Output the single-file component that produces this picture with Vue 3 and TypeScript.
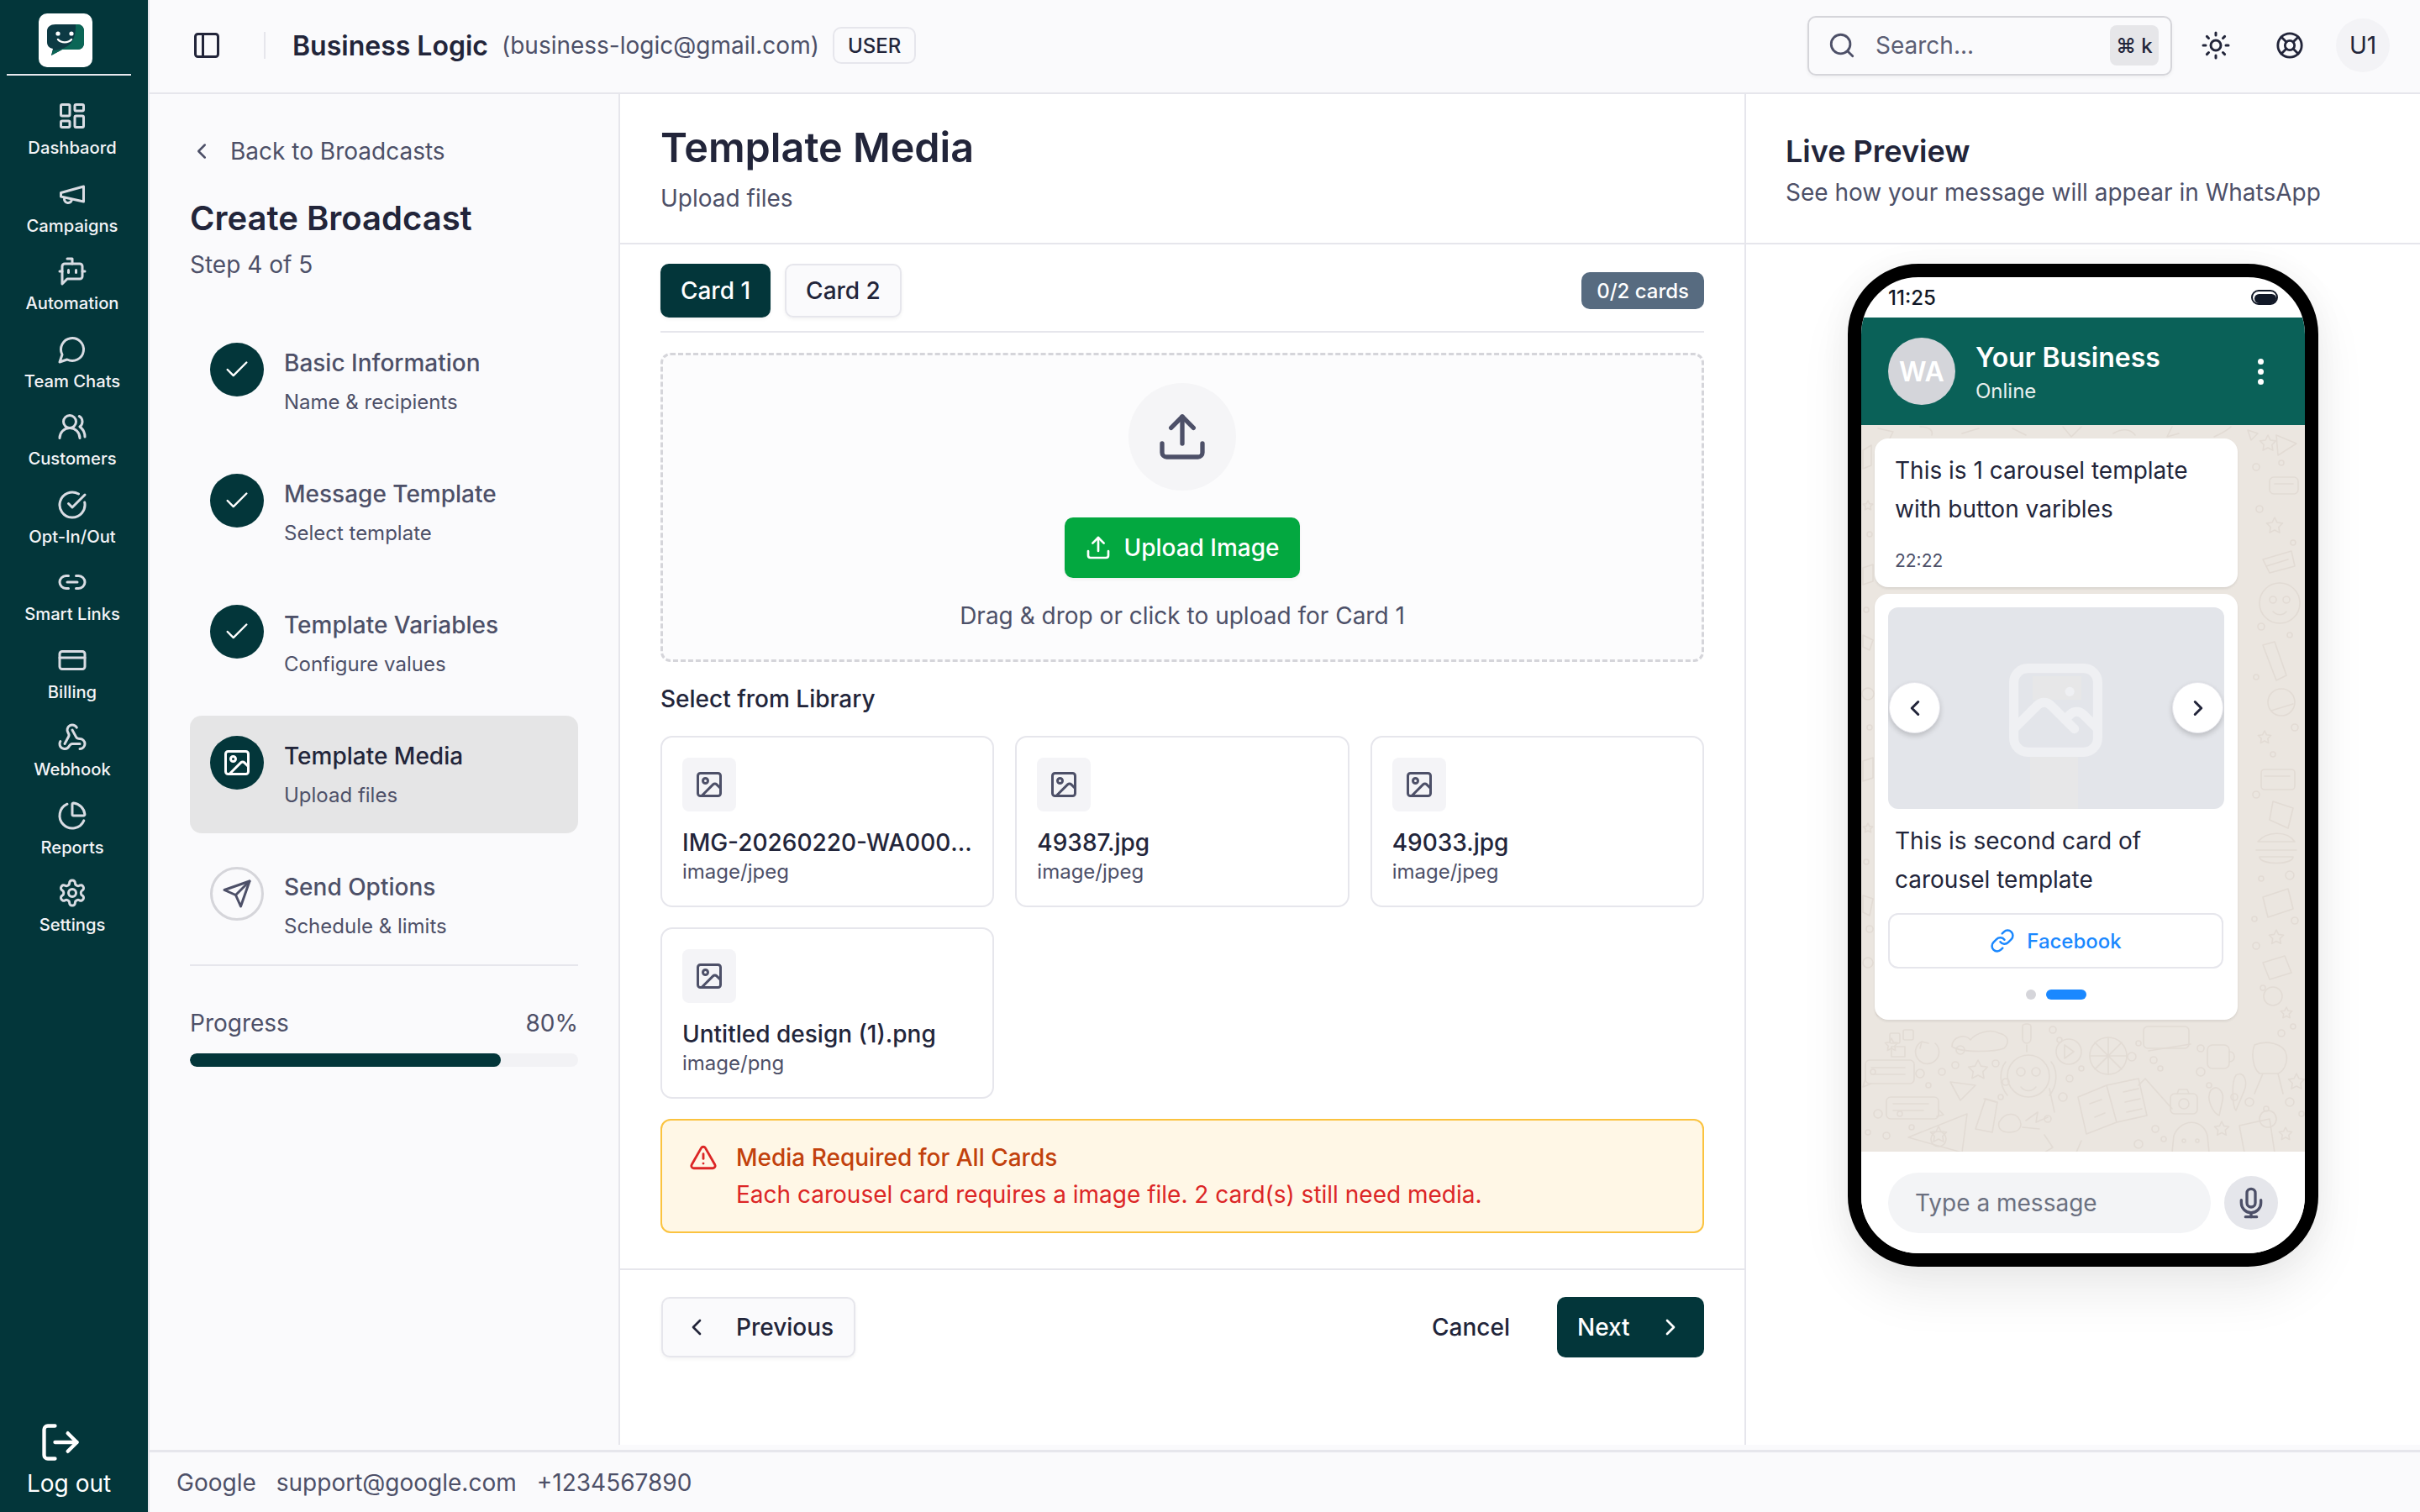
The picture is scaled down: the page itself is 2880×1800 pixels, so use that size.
<script setup lang="ts">
import { h } from 'vue'

const c = (x: number, y: number, r: number) => `M${x - r} ${y}a${r} ${r} 0 1 0 ${2 * r} 0a${r} ${r} 0 1 0 ${-2 * r} 0`
const rr = (x: number, y: number, w: number, he: number, r: number) =>
  `M${x + r} ${y}h${w - 2 * r}a${r} ${r} 0 0 1 ${r} ${r}v${he - 2 * r}a${r} ${r} 0 0 1 ${-r} ${r}h${-(w - 2 * r)}a${r} ${r} 0 0 1 ${-r} ${-r}v${-(he - 2 * r)}a${r} ${r} 0 0 1 ${r} ${-r}z`

const icons: Record<string, string[]> = {
  dashboard: [rr(3, 3, 7, 9, 1), rr(14, 3, 7, 5, 1), rr(14, 12, 7, 9, 1), rr(3, 16, 7, 5, 1)],
  megaphone: ['m3 11 18-5v12L3 14v-3z', 'M11.6 16.8a3 3 0 1 1-5.8-1.6'],
  bot: ['M12 6V2H8', 'm8 18-4 4V8a2 2 0 0 1 2-2h12a2 2 0 0 1 2 2v8a2 2 0 0 1-2 2Z', 'M2 12h2', 'M9 11v2', 'M15 11v2', 'M20 12h2'],
  chat: ['M7.9 20A9 9 0 1 0 4 16.1L2 22Z'],
  users: ['M18 21a8 8 0 0 0-16 0', c(10, 8, 5), 'M22 20c0-3.37-2-6.5-4-8a5 5 0 0 0-.45-8.3'],
  optin: ['M21.801 10A10 10 0 1 1 17 3.335', 'm9 11 3 3L22 4'],
  link2: ['M9 17H7A5 5 0 0 1 7 7h2', 'M15 7h2a5 5 0 1 1 0 10h-2', 'M8 12h8'],
  card: [rr(2, 5, 20, 14, 2), 'M2 10h20'],
  webhook: ['M18 16.98h-5.99c-1.1 0-1.95.94-2.48 1.9A4 4 0 0 1 2 17c.01-.7.2-1.4.57-2', 'm6 17 3.13-5.78c.53-.97.1-2.18-.5-3.1a4 4 0 1 1 6.89-4.06', 'm12 6 3.13 5.73C15.66 12.7 16.9 13 18 13a4 4 0 0 1 0 8'],
  pie: ['M21 12c.552 0 1.005-.449.95-.998a10 10 0 0 0-8.953-8.951c-.55-.055-.998.398-.998.95v8a1 1 0 0 0 1 1z', 'M21.21 15.89A10 10 0 1 1 8 2.83'],
  settings: ['M12.22 2h-.44a2 2 0 0 0-2 2v.18a2 2 0 0 1-1 1.73l-.43.25a2 2 0 0 1-2 0l-.15-.08a2 2 0 0 0-2.73.73l-.22.38a2 2 0 0 0 .73 2.73l.15.1a2 2 0 0 1 1 1.72v.51a2 2 0 0 1-1 1.74l-.15.09a2 2 0 0 0-.73 2.73l.22.38a2 2 0 0 0 2.73.73l.15-.08a2 2 0 0 1 2 0l.43.25a2 2 0 0 1 1 1.73V20a2 2 0 0 0 2 2h.44a2 2 0 0 0 2-2v-.18a2 2 0 0 1 1-1.73l.43-.25a2 2 0 0 1 2 0l.15.08a2 2 0 0 0 2.73-.73l.22-.39a2 2 0 0 0-.73-2.73l-.15-.08a2 2 0 0 1-1-1.74v-.5a2 2 0 0 1 1-1.74l.15-.09a2 2 0 0 0 .73-2.73l-.22-.38a2 2 0 0 0-2.73-.73l-.15.08a2 2 0 0 1-2 0l-.43-.25a2 2 0 0 1-1-1.73V4a2 2 0 0 0-2-2z', c(12, 12, 3)],
  logout: ['M9 21H5a2 2 0 0 1-2-2V5a2 2 0 0 1 2-2h4', 'm16 17 5-5-5-5', 'M21 12H9'],
  panel: [rr(3, 3, 18, 18, 2), 'M9 3v18'],
  search: [c(11, 11, 8), 'm21 21-4.3-4.3'],
  sun: [c(12, 12, 4), 'M12 2v2', 'M12 20v2', 'm4.93 4.93 1.41 1.41', 'm17.66 17.66 1.41 1.41', 'M2 12h2', 'M20 12h2', 'm6.34 17.66-1.41 1.41', 'm19.07 4.93-1.41 1.41'],
  help: [c(12, 12, 10), 'm4.93 4.93 4.24 4.24', 'm14.83 9.17 4.24-4.24', 'm14.83 14.83 4.24 4.24', 'm9.17 14.83-4.24 4.24', c(12, 12, 4)],
  image: [rr(3, 3, 18, 18, 2), c(9, 9, 2), 'm21 15-3.086-3.086a2 2 0 0 0-2.828 0L6 21'],
  photo: [rr(3, 3, 18, 18, 3), 'M15 8h.01', 'M3 16l5-5c.928-.893 2.072-.893 3 0l5 5', 'M14 14l1-1c.928-.893 2.072-.893 3 0l3 3'],
  upload: ['M21 15v4a2 2 0 0 1-2 2H5a2 2 0 0 1-2-2v-4', 'M17 8l-5-5-5 5', 'M12 3v12'],
  send: ['m22 2-7 20-4-9-9-4Z', 'M22 2 11 13'],
  alert: ['m21.73 18-8-14a2 2 0 0 0-3.48 0l-8 14A2 2 0 0 0 4 21h16a2 2 0 0 0 1.73-3', 'M12 9v4', 'M12 17h.01'],
  link: ['M10 13a5 5 0 0 0 7.54.54l3-3a5 5 0 0 0-7.07-7.07l-1.72 1.71', 'M14 11a5 5 0 0 0-7.54-.54l-3 3a5 5 0 0 0 7.07 7.07l1.71-1.71'],
  mic: ['M12 2a3 3 0 0 0-3 3v7a3 3 0 0 0 6 0V5a3 3 0 0 0-3-3Z', 'M19 10v2a7 7 0 0 1-14 0v-2', 'M12 19v3', 'M8 22h8'],
  left: ['m15 18-6-6 6-6'],
  right: ['m9 18 6-6-6-6'],
  check: ['M20 6 9 17l-5-5'],
}

const Icon = (props: { n: string; s?: number; w?: number }) =>
  h(
    'svg',
    {
      width: props.s ?? 36,
      height: props.s ?? 36,
      viewBox: '0 0 24 24',
      fill: 'none',
      stroke: 'currentColor',
      'stroke-width': props.w ?? 2,
      'stroke-linecap': 'round',
      'stroke-linejoin': 'round',
      style: 'display:block;flex:none',
    },
    (icons[props.n] ?? []).map((d) => h('path', { d })),
  )
Icon.props = ['n', 's', 'w']

const nav = [
  { n: 'dashboard', t: 'Dashbaord' },
  { n: 'megaphone', t: 'Campaigns' },
  { n: 'bot', t: 'Automation' },
  { n: 'chat', t: 'Team Chats' },
  { n: 'users', t: 'Customers' },
  { n: 'optin', t: 'Opt-In/Out' },
  { n: 'link2', t: 'Smart Links' },
  { n: 'card', t: 'Billing' },
  { n: 'webhook', t: 'Webhook' },
  { n: 'pie', t: 'Reports' },
  { n: 'settings', t: 'Settings' },
]
const steps = [
  { t: 'Basic Information', s: 'Name & recipients', st: 'done' },
  { t: 'Message Template', s: 'Select template', st: 'done' },
  { t: 'Template Variables', s: 'Configure values', st: 'done' },
  { t: 'Template Media', s: 'Upload files', st: 'active' },
  { t: 'Send Options', s: 'Schedule & limits', st: 'todo' },
]
const files = [
  { n: 'IMG-20260220-WA0001.jpg', m: 'image/jpeg' },
  { n: '49387.jpg', m: 'image/jpeg' },
  { n: '49033.jpg', m: 'image/jpeg' },
  { n: 'Untitled design (1).png', m: 'image/png' },
]
const progress = 80

const star = (x: number, y: number, r: number) => {
  let d = ''
  for (let i = 0; i < 10; i++) {
    const a = -Math.PI / 2 + (i * Math.PI) / 5
    const q = i % 2 ? r * 0.5 : r
    d += `${i ? 'L' : 'M'}${(x + q * Math.cos(a)).toFixed(1)} ${(y + q * Math.sin(a)).toFixed(1)}`
  }
  return d + 'z'
}
const doodles: string[] = [
  rr(5, 756, 58, 28, 5), 'M12 765h40M12 773h40', 'M5 778l-3 10 10-4',
  rr(30, 800, 62, 26, 5), 'M38 808h42M38 816h36', 'M92 815l6 6-8 2',
  star(139, 768, 12), star(36, 738, 8), star(92, 845, 10), star(429, 838, 9), star(518, 782, 10), star(505, 844, 8),
  c(199, 775, 25), c(190, 770, 5), c(208, 770, 5), 'M190 788c5 6 13 6 18 0', 'M172 758c-8 10-8 28 2 40M226 758c8 10 8 28-2 40',
  'M224 790l6 28', c(294, 751, 22), 'M294 729v44M272 751h44M278 735l32 32M310 735l-32 32',
  c(247, 746, 15), 'M242 738l11 8-11 8z',
  rr(336, 716, 54, 26, 5), 'M342 745l50-8',
  'M258 800l34-14 12 44-36 14zM292 786l38-8 10 44-36 8', 'M272 808l14-5M278 824l12-5M312 794l18-4M314 806l18-4M316 818l18-4',
  rr(368, 796, 32, 24, 5), c(384, 808, 6), 'M376 796l2-5h10l2 5',
  rr(412, 738, 26, 28, 6), 'M438 746c8 0 8 12 0 12',
  'M468 738c14-6 36-2 38 12 2 10-4 20-10 22h-22c-8-6-10-24-6-34zM478 772l-10 24M496 772l6 24',
  'M446 774c10-6 14 8 10 18l-10 24c-4-4-6-34 0-42zM416 792c8-8 16 2 14 12l-4 18c-8-4-16-20-10-30z',
  'M372 846c8-20 34-22 40 0l2 20h-44z', c(384, 852, 2), c(400, 852, 2),
  'M450 834l36-8 6 40h-36z', c(484, 826, 10),
  'M56 848l70-28-6 46z', c(92, 850, 9),
  'M136 838l12-36 14 4-6 36z', 'M146 802l14 4',
  'M164 830c8-14 24-12 26 2 0 8-8 10-14 10-8 0-14-4-12-12z',
  'M106 782l30 4-18 18z',
  rr(34, 724, 12, 12, 2), rr(50, 720, 12, 12, 2), 'M36 740h16v12H36z',
  'M88 736a14 14 0 1 1-16-2M72 734l-2 8M72 734l8 2',
  'M108 740c0-12 16-16 22-8 6-8 24-14 34-8 10 2 14 10 6 18-10 4-50 6-62-2z',
  'M192 716c0-4 10-4 10 0v14c0 8-10 8-10 0zM197 738v8',
  'M338 778l32 36M330 786l8-8',
  'M196 828l14-10-2 12 14-6M192 836l20 2',
  'M218 845l10 15-10 6M262 852l-6 14',
  star(484, 22, 10), 'M494 12l24 10-22 14z', 'M460 6l12 4-8 8z', rr(486, 62, 34, 20, 5), 'M492 70h22',
  star(492, 120, 10), 'M478 160l34-10 4 18-30 8z', 'M482 168l26-8',
  c(498, 212, 24), c(490, 208, 4), c(506, 208, 4), 'M490 222c5 5 12 5 16 0',
  'M478 262l14-4 14 40-12 6z', c(500, 330, 16), 'M488 340l26-8',
  star(480, 372, 8), rr(476, 410, 40, 24, 4), 'M480 418h30',
  'M490 448l24 8-6 24-22-10z',
  'M472 496c10-12 34-14 44 0z', 'M470 506h48M474 514h40c0 10-40 10-40 0z',
  'M478 562l30-10 6 24-30 10z', star(494, 610, 9), 'M478 640l26-8 8 20-26 8z',
  c(490, 680, 11), star(506, 700, 7),
  'M2 30l10-6v24l-10 4z', star(8, 96, 6), 'M2 170l12-4v20l-12 4z', 'M2 250l12 6-4 12-8-4z', c(8, 320, 7), 'M2 400l12-4v24l-12 4z', star(8, 480, 6), 'M2 560l12 4-4 20-8-4z', c(8, 640, 6),
  'M20 4l18 4-4 8M70 2c10 0 16 4 14 10M120 10l20-6M180 4l16 8M240 2l10 12 12-12M300 10c10-6 20-6 26 2M370 2l-6 12 14-4M420 14c8-4 14-6 20-12',
]
const bubbles: Array<[number, number, number]> = [
  [22, 700, 4], [14, 770, 3], [70, 772, 5], [80, 786, 3], [96, 770, 4], [112, 762, 4], [118, 744, 5], [160, 760, 4], [172, 782, 4], [166, 800, 3],
  [20, 820, 5], [8, 842, 3], [30, 846, 4], [46, 820, 3], [60, 836, 3], [228, 720, 4], [236, 732, 3], [248, 778, 4], [262, 766, 3], [240, 800, 5],
  [222, 826, 4], [322, 752, 5], [330, 736, 3], [348, 756, 4], [356, 766, 3], [404, 742, 4], [404, 770, 5], [414, 786, 3], [350, 838, 4], [330, 856, 5],
  [360, 850, 3], [444, 800, 4], [462, 806, 5], [482, 814, 3], [510, 806, 5], [524, 820, 3], [500, 724, 4], [514, 716, 3], [470, 50, 4], [500, 45, 3],
  [474, 100, 4], [514, 140, 3], [476, 240, 4], [510, 250, 3], [470, 300, 3], [516, 360, 4], [490, 392, 3], [470, 440, 4], [510, 536, 5], [476, 540, 3],
  [468, 588, 3], [516, 590, 4], [470, 620, 4], [478, 670, 3], [10, 130, 3], [6, 220, 3], [10, 360, 3], [6, 520, 3], [10, 600, 4],
]
</script>

<template>
  <div class="app">
    <aside class="side">
      <div class="logo-wrap">
        <div class="logo">
          <svg width="48" height="40" viewBox="0 0 48 40">
            <path d="M12 1h26c5 0 8 3 8 8v14c0 5-3 8-8 8H20L7 38l2-8C4 29 2 26 2 22V9c0-5 4-8 10-8z" fill="#0d3a44" />
            <path d="M36 1h2c5 0 8 3 8 8v14c0 5-3 8-8 8H20L7 38l2-6c14-1 28-6 27-31z" fill="#0b6656" />
            <circle cx="15" cy="12" r="2.6" fill="#fff" />
            <circle cx="31" cy="12" r="2.6" fill="#fff" />
            <path d="M15 19c4 4.500 12 4.500 16 0" fill="none" stroke="#fff" stroke-width="2.400" stroke-linecap="round" />
          </svg>
        </div>
      </div>
      <nav class="nav">
        <a v-for="i in nav" :key="i.t" class="nav-item">
          <Icon :n="i.n" :s="36" />
          <span>{{ i.t }}</span>
        </a>
      </nav>
      <a class="logout">
        <Icon :n="'logout'" :s="52" :w="2" />
        <span>Log out</span>
      </a>
    </aside>

    <div class="main">
      <header class="top">
        <div class="top-left">
          <Icon class="ink" :n="'panel'" :s="36" />
          <i class="vsep"></i>
          <strong class="biz">Business Logic</strong>
          <span class="mail">(business-logic@gmail.com)</span>
          <span class="role">USER</span>
        </div>
        <div class="top-right">
          <div class="search">
            <Icon class="muted" :n="'search'" :s="34" />
            <span class="search-text">Search...</span>
            <kbd class="kbd">⌘ k</kbd>
          </div>
          <Icon class="ink sun" :n="'sun'" :s="36" />
          <Icon class="ink help" :n="'help'" :s="34" />
          <span class="avatar">U1</span>
        </div>
      </header>

      <div class="content">
        <section class="steps-panel">
          <a class="back"><Icon :n="'left'" :s="30" /><span>Back to Broadcasts</span></a>
          <h2 class="cb-title">Create Broadcast</h2>
          <p class="cb-step">Step 4 of 5</p>
          <div class="steps">
            <div v-for="s in steps" :key="s.t" class="step" :class="s.st">
              <span class="dot">
                <Icon v-if="s.st === 'done'" :n="'check'" :s="34" :w="1.700" />
                <Icon v-else-if="s.st === 'active'" :n="'image'" :s="36" />
                <Icon v-else :n="'send'" :s="36" />
              </span>
              <div class="step-text">
                <div class="step-title">{{ s.t }}</div>
                <div class="step-sub">{{ s.s }}</div>
              </div>
            </div>
          </div>
          <div class="progress">
            <div class="progress-label"><span>Progress</span><span>{{ progress }}%</span></div>
            <div class="bar"><div class="bar-fill" :style="{ width: progress + '%' }"></div></div>
          </div>
        </section>

        <section class="center">
          <div class="center-head">
            <h1>Template Media</h1>
            <p>Upload files</p>
          </div>
          <div class="center-body">
            <div class="tabs">
              <button class="tab on">Card 1</button>
              <button class="tab">Card 2</button>
              <span class="count">0/2 cards</span>
            </div>
            <div class="drop">
              <span class="drop-circle"><Icon :n="'upload'" :s="64" /></span>
              <button class="upload-btn"><Icon :n="'upload'" :s="32" /><span>Upload Image</span></button>
              <p class="drop-text">Drag &amp; drop or click to upload for Card 1</p>
            </div>
            <div class="lib-label">Select from Library</div>
            <div class="lib">
              <div v-for="f in files" :key="f.n" class="file">
                <span class="file-ico"><Icon :n="'image'" :s="36" /></span>
                <div class="file-name">{{ f.n }}</div>
                <div class="file-type">{{ f.m }}</div>
              </div>
            </div>
            <div class="alert">
              <Icon class="alert-ico" :n="'alert'" :s="34" />
              <div>
                <div class="alert-title">Media Required for All Cards</div>
                <div class="alert-desc">Each carousel card requires a image file. 2 card(s) still need media.</div>
              </div>
            </div>
          </div>
          <div class="center-foot">
            <button class="prev"><Icon :n="'left'" :s="32" /><span>Previous</span></button>
            <div class="foot-right">
              <button class="cancel">Cancel</button>
              <button class="next"><span>Next</span><Icon :n="'right'" :s="32" /></button>
            </div>
          </div>
        </section>

        <section class="preview">
          <div class="preview-head">
            <h2>Live Preview</h2>
            <p>See how your message will appear in WhatsApp</p>
          </div>
          <div class="stage">
            <div class="phone">
              <div class="status">
                <span>11:25</span>
                <svg width="32" height="18" viewBox="0 0 32 18">
                  <rect x="1" y="1" width="30" height="16" rx="8" fill="none" stroke="#111827" stroke-width="2" />
                  <rect x="4" y="5" width="26" height="11" rx="5.500" fill="#111827" />
                </svg>
              </div>
              <div class="wa-head">
                <span class="wa-av">WA</span>
                <div class="wa-id">
                  <div class="wa-name">Your Business</div>
                  <div class="wa-on">Online</div>
                </div>
                <span class="wa-more"><i></i><i></i><i></i></span>
              </div>
              <div class="chat">
                <svg class="doodle" viewBox="0 0 528 865" width="528" height="865" aria-hidden="true">
                  <g fill="none" stroke="#e2dbd4" stroke-width="1.600" stroke-linejoin="round" stroke-linecap="round">
                    <path v-for="(d, idx) in doodles" :key="idx" :d="d" />
                    <circle v-for="(b, idx) in bubbles" :key="'b' + idx" :cx="b[0]" :cy="b[1]" :r="b[2]" />
                  </g>
                </svg>
                <div class="bubble first">
                  <p class="msg">This is 1 carousel template<br />with button varibles</p>
                  <div class="time">22:22</div>
                </div>
                <div class="bubble second">
                  <div class="media">
                    <i class="dith d1"></i><i class="dith d2"></i>
                    <Icon class="media-ico" :n="'photo'" :s="133" />
                    <button class="car l"><Icon :n="'left'" :s="30" :w="2.400" /></button>
                    <button class="car r"><Icon :n="'right'" :s="30" :w="2.400" /></button>
                  </div>
                  <p class="msg card-msg">This is second card of<br />carousel template</p>
                  <button class="fb"><Icon :n="'link'" :s="30" /><span>Facebook</span></button>
                  <div class="pager"><i></i><i class="cur"></i></div>
                </div>
              </div>
              <div class="inputbar">
                <div class="pill">Type a message</div>
                <span class="micbtn"><Icon :n="'mic'" :s="40" /></span>
              </div>
            </div>
          </div>
        </section>
      </div>

      <footer class="foot">
        <span>Google</span><span>support@google.com</span><span>+1234567890</span>
      </footer>
    </div>
  </div>
</template>

<style>
html, body { margin: 0; padding: 0; background: #fafafc; }
</style>

<style scoped>
* { box-sizing: border-box; }
h1, h2, p { margin: 0; }
button { font: inherit; cursor: pointer; }
.app {
  display: flex; width: 2880px; height: 1800px; overflow: hidden;
  font-family: Inter, "Noto Sans", sans-serif; color: #22253a; background: #fafafc; font-size: 28px;
}
/* sidebar */
.side { width: 178px; flex: none; background: #03363a; border-right: 2px solid #e6e6ec; display: flex; flex-direction: column; color: #f2f3f6; }
.logo-wrap { height: 90px; margin: 0 20px 0 8px; border-bottom: 2px solid #e8e9ee; padding: 16px 0 0 38px; }
.logo { width: 64px; height: 64px; background: #fff; border-radius: 10px; display: flex; align-items: center; justify-content: center; }
.nav { padding: 30px 4px 0 0; display: grid; grid-auto-rows: 92.5px; }
.nav-item { display: flex; flex-direction: column; align-items: center; gap: 6px; color: #d9dce3; }
.nav-item span { font-size: 20.200px; line-height: 28px; font-weight: 500; color: #f3f4f7; white-space: nowrap; }
.logout { margin-top: auto; padding: 0 0 14px 0; display: flex; flex-direction: column; align-items: flex-start; color: #fff; }
.logout svg { margin-left: 46px; }
.logout span { font-size: 28px; line-height: 40px; margin-left: 32px; margin-top: 3px; }

/* main */
.main { flex: 1; min-width: 0; display: flex; flex-direction: column; }
.top { height: 112px; flex: none; border-bottom: 2px solid #e6e6ec; display: flex; justify-content: space-between; align-items: center; padding: 0 36px 2px 50px; background: #fafafc; }
.top-left, .top-right { display: flex; align-items: center; }
.ink { color: #22253a; }
.muted { color: #4d5068; }
.vsep { width: 2px; height: 32px; background: #e6e6ec; margin: 0 32px 0 50px; }
.biz { font-size: 32px; font-weight: 600; color: #22253a; margin-right: 16px; }
.mail { font-size: 28px; color: #4d5068; }
.role { margin-left: 16px; height: 44px; padding: 0 16px; border: 2px solid #e6e6ec; border-radius: 10px; font-size: 24px; font-weight: 500; display: flex; align-items: center; }
.search { width: 434px; height: 71px; border: 2px solid #d5d5da; border-radius: 10px; display: flex; align-items: center; padding: 0 14px 0 22px; box-shadow: 0 2px 4px rgba(0,0,0,.05); }
.search-text { margin-left: 23px; font-size: 28px; color: #5b5e74; flex: 1; }
.kbd { width: 58px; height: 48px; background: #e6e6e9; border-radius: 8px; display: flex; align-items: center; justify-content: center; font: 500 24px Inter, sans-serif; color: #22253a; }
.sun { margin-left: 34px; }
.help { margin-left: 53px; }
.avatar { margin-left: 38px; width: 64px; height: 64px; border-radius: 50%; background: #f3f3f6; display: flex; align-items: center; justify-content: center; font-size: 28px; color: #22253a; }

.content { flex: 1; min-height: 0; display: flex; align-items: stretch; background: #fff; margin-bottom: 6px; }

/* steps panel */
.steps-panel { width: 560px; flex: none; background: #fafafc; border-right: 2px solid #e6e6ec; padding: 48px 48px 0 48px; }
.back { display: flex; align-items: center; height: 40px; color: #4d5068; font-size: 28px; gap: 19px; margin-left: -1px; }
.cb-title { font-size: 40px; line-height: 56px; font-weight: 600; margin-top: 32px; color: #22253a; }
.cb-step { font-size: 28px; line-height: 40px; margin-top: 7px; color: #4d5068; }
.steps { margin-top: 49px; display: grid; grid-auto-rows: 140px; row-gap: 16px; }
.step { display: flex; gap: 24px; padding: 24px; border-radius: 14px; }
.step.active { background: #e5e5e6; }
.dot { width: 64px; height: 64px; border-radius: 50%; background: #03363a; color: #fff; display: flex; align-items: center; justify-content: center; flex: none; }
.step.todo .dot { background: #fafafc; border: 3px solid #d5d5da; color: #4d5068; }
.step-text { padding-top: 4px; }
.step-title { font-size: 28px; line-height: 40px; font-weight: 500; color: #4d5068; white-space: nowrap; }
.step.active .step-title { color: #22253a; }
.step-sub { font-size: 24px; line-height: 34px; margin-top: 10px; color: #4d5068; white-space: nowrap; }
.progress { border-top: 2px solid #e6e6ec; padding-top: 48px; }
.progress-label { display: flex; justify-content: space-between; line-height: 40px; color: #4d5068; font-size: 28px; }
.bar { margin-top: 16px; height: 16px; border-radius: 8px; background: #f2f2f5; overflow: hidden; }
.bar-fill { height: 100%; background: #03363a; border-radius: 8px; }

/* center */
.center { width: 1340px; flex: none; border-right: 2px solid #e6e6ec; display: flex; flex-direction: column; background: #fff; }
.center-head { height: 179px; border-bottom: 2px solid #e6e6ec; padding: 34px 49px 0 48px; }
.center-head h1 { font-size: 48.500px; line-height: 60px; font-weight: 600; color: #22253a; }
.center-head p { font-size: 28px; line-height: 40px; margin-top: 10px; color: #4d5068; }
.center-body { padding: 23px 48px 0 48px; }
.tabs { display: flex; align-items: center; gap: 17px; padding-bottom: 16px; border-bottom: 2px solid #e6e6ec; }
.tab { height: 64px; width: 139px; border: 2px solid #e6e6ec; border-radius: 10px; background: #fafafc; color: #22253a; font-size: 28px; font-weight: 500; box-shadow: 0 2px 4px rgba(0,0,0,.05); padding: 0; }
.tab.on { width: 131px; background: #03363a; border-color: #03363a; color: #fff; }
.count { margin-left: auto; height: 44px; padding: 0 18px; border-radius: 10px; background: #576b80; color: #fff; font-size: 24px; font-weight: 500; display: flex; align-items: center; }
.drop { margin-top: 24px; height: 368px; border: 3px dashed #d5d5da; border-radius: 12px; background: #fcfcfd; display: flex; flex-direction: column; align-items: center; padding-top: 33px; }
.drop-circle { width: 128px; height: 128px; border-radius: 50%; background: #f5f5f7; color: #4d5068; display: flex; align-items: center; justify-content: center; }
.upload-btn { margin-top: 32px; width: 280px; height: 72px; border: 0; border-radius: 10px; background: #03a840; color: #fff; display: flex; align-items: center; justify-content: center; gap: 14px; font-size: 28px; font-weight: 500; box-shadow: 0 2px 4px rgba(0,0,0,.05); }
.drop-text { margin-top: 25px; line-height: 40px; font-size: 28px; color: #4d5068; }
.lib-label { margin-top: 24px; font-size: 28px; line-height: 40px; font-weight: 500; color: #22253a; }
.lib { margin-top: 24px; display: grid; grid-template-columns: repeat(3, minmax(0, 1fr)); column-gap: 25px; row-gap: 24px; grid-auto-rows: 204px; }
.file { border: 2px solid #e6e6ec; border-radius: 14px; padding: 24px 24px 0; min-width: 0; }
.file-ico { width: 64px; height: 64px; background: #f4f4f7; border-radius: 8px; display: flex; align-items: center; justify-content: center; color: #4d5068; }
.file-name { margin-top: 17px; font-size: 28px; line-height: 40px; font-weight: 500; color: #22253a; white-space: nowrap; overflow: hidden; text-overflow: ellipsis; }
.file-type { margin-top: -1px; font-size: 24px; line-height: 32px; color: #4d5068; }
.alert { margin-top: 24px; height: 136px; border: 2px solid #fbc33f; border-radius: 12px; background: #fff7e6; display: flex; padding: 22px 30px 0 32px; gap: 22px; }
.alert-ico { color: #dc2626; margin-top: 5px; }
.alert-title { font-size: 28px; line-height: 44px; font-weight: 500; color: #c2410c; }
.alert-desc { font-size: 28px; line-height: 44px; color: #dc2626; }
.center-foot { margin-top: 42px; border-top: 2px solid #e6e6ec; padding: 32px 48px 0 49px; display: flex; justify-content: space-between; }
.prev { width: 231px; height: 72px; border: 2px solid #e6e6ec; border-radius: 10px; background: #fafafc; display: flex; align-items: center; padding: 0 0 0 24px; gap: 31px; font-size: 28px; font-weight: 500; color: #22253a; box-shadow: 0 2px 4px rgba(0,0,0,.05); }
.foot-right { display: flex; align-items: center; gap: 56px; }
.cancel { border: 0; background: none; font-size: 28px; font-weight: 500; color: #22253a; padding: 0; }
.next { width: 175px; height: 72px; border: 0; border-radius: 10px; background: #03363a; color: #fff; font-size: 28px; font-weight: 500; display: flex; align-items: center; padding: 0 24px; justify-content: space-between; }

/* preview */
.preview { flex: 1; min-width: 0; background: #fff; display: flex; flex-direction: column; }
.preview-head { height: 179px; border-bottom: 2px solid #e6e6ec; padding: 44px 0 0 47px; }
.preview-head h2 { font-size: 36px; line-height: 48px; font-weight: 600; color: #22253a; }
.preview-head p { font-size: 28px; line-height: 40px; margin-top: 5px; color: #4d5068; }
.stage { padding-top: 23px; display: flex; justify-content: center; }
.phone { width: 560px; height: 1194px; border: 16px solid #000; border-radius: 84px; background: #fff; overflow: hidden; display: flex; flex-direction: column; box-shadow: 0 30px 60px rgba(0,0,0,.08), 0 0 40px rgba(0,0,0,.04); }
.status { height: 48px; flex: none; display: flex; align-items: center; justify-content: space-between; padding: 0 32px; font-size: 24px; font-weight: 500; color: #111827; }
.wa-head { height: 128px; flex: none; background: #0a6158; color: #fff; display: flex; align-items: center; padding: 0 32px; }
.wa-av { width: 80px; height: 80px; border-radius: 50%; background: #d4d5da; display: flex; align-items: center; justify-content: center; font-size: 32px; font-weight: 600; color: #fff; }
.wa-id { margin-left: 24px; flex: 1; }
.wa-name { font-size: 32px; line-height: 44px; font-weight: 600; padding-top: 1px; }
.wa-on { font-size: 24px; line-height: 32px; margin-top: 2px; color: #e8efee; }
.wa-more { width: 8px; display: flex; flex-direction: column; gap: 5px; margin-right: 16px; }
.wa-more i { width: 7px; height: 7px; border-radius: 50%; background: #fff; }
.chat { flex: 1; min-height: 0; position: relative; background: #ebe6e0; padding: 16px 0 0 16px; }
.doodle { position: absolute; left: 0; top: 0; display: block; }
.bubble { position: relative; width: 432px; background: #fff; border-radius: 16px; box-shadow: 0 2px 3px rgba(0,0,0,.08); }
.first { height: 177px; padding: 15px 20px 0 24px; }
.second { margin-top: 8px; height: 507px; padding: 16px; }
.msg { font-size: 28px; line-height: 46px; color: #22253a; white-space: nowrap; }
.time { margin-top: 24px; font-size: 21px; line-height: 30px; color: #4d5068; }
.media { position: relative; width: 400px; height: 240px; background: #e3e5ea; border-radius: 12px; overflow: hidden; }
.dith { position: absolute; background: #e7e7e8; }
.d1 { left: 169px; top: 169px; width: 57px; height: 71px; }
.d2 { left: 172px; top: 82px; width: 58px; height: 28px; }
.media-ico { position: absolute; left: 133px; top: 56px; color: #eff0f3; }
.car { position: absolute; top: 89px; width: 61px; height: 61px; border-radius: 50%; background: #fff; border: 1px solid #e6e6ec; color: #22253a; display: flex; align-items: center; justify-content: center; padding: 0; box-shadow: 0 3px 6px rgba(0,0,0,.18); }
.car.l { left: 1px; }
.car.r { right: 1px; }
.card-msg { margin: 15px 0 0 8px; }
.fb { margin-top: 17px; width: 399px; height: 66px; border: 2px solid #e6e6ec; border-radius: 12px; background: #fff; color: #1a88ff; display: flex; align-items: center; justify-content: center; gap: 14px; font-size: 24px; font-weight: 500; padding: 0; }
.pager { margin-top: 25px; display: flex; justify-content: center; gap: 12px; }
.pager i { width: 12px; height: 12px; border-radius: 6px; background: #d5d5da; }
.pager i.cur { width: 48px; background: #1a88ff; }
.inputbar { height: 121px; flex: none; display: flex; align-items: center; padding: 0 32px; gap: 16px; background: #fff; }
.pill { width: 384px; height: 72px; border-radius: 36px; background: #f3f4f6; display: flex; align-items: center; padding-left: 32px; font-size: 28px; color: #6b7080; }
.micbtn { width: 64px; height: 64px; border-radius: 50%; background: #e5e6eb; color: #4d5068; display: flex; align-items: center; justify-content: center; }

/* footer */
.foot { height: 74px; flex: none; border-top: 3px solid #e6e6ec; display: flex; align-items: center; gap: 24px; padding: 0 0 0 32px; font-size: 28px; color: #4d5068; background: #fafafc; }
</style>
